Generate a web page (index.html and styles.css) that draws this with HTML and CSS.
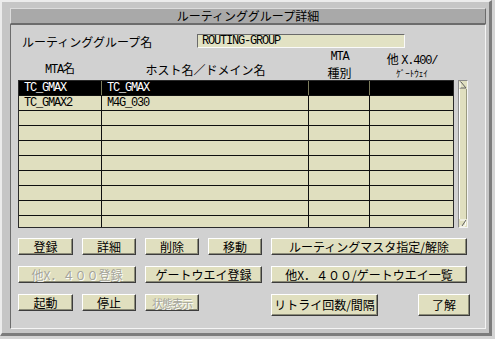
FILE: index.html
```html
<!DOCTYPE html>
<html>
<head>
<meta charset="utf-8">
<title>ルーティンググループ詳細</title>
<link rel="stylesheet" href="styles.css">
</head>
<body>
<div class="window">
  <div class="titlebar">ルーティンググループ詳細</div>
  <div class="panel">
    <div class="name-row">
      <span class="label">ルーティンググループ名</span>
      <div class="field">ROUTING-GROUP</div>
    </div>

    <div class="list-head">
      <div class="one"><span class="mono">MTA</span>名</div>
      <div class="one">ホスト名／ドメイン名</div>
      <div class="two"><div class="mono">MTA</div><div>種別</div></div>
      <div class="two gw"><div>他 <span class="mono">X.400/</span></div><div class="hw">ｹﾞｰﾄｳｪｲ</div></div>
    </div>

    <div class="list-area">
      <div class="list">
        <div class="row sel"><div>TC_GMAX</div><div>TC_GMAX</div><div></div><div></div></div>
        <div class="row"><div>TC_GMAX2</div><div>M4G_030</div><div></div><div></div></div>
        <div class="row"><div></div><div></div><div></div><div></div></div>
        <div class="row"><div></div><div></div><div></div><div></div></div>
        <div class="row"><div></div><div></div><div></div><div></div></div>
        <div class="row"><div></div><div></div><div></div><div></div></div>
        <div class="row"><div></div><div></div><div></div><div></div></div>
        <div class="row"><div></div><div></div><div></div><div></div></div>
        <div class="row"><div></div><div></div><div></div><div></div></div>
        <div class="row"><div></div><div></div><div></div><div></div></div>
      </div>
      <div class="scrollbar">
        <svg class="arr" width="8" height="8" viewBox="0 0 8 8"><polyline points="1,7 7,7 2,1 1,1" fill="none" stroke="#606060" stroke-width="1"/><line x1="1" y1="1" x2="1" y2="7" stroke="#fff"/></svg>
        <div class="track"></div>
        <svg class="arr" width="8" height="8" viewBox="0 0 8 8"><polyline points="1,1 7,1 6,7 1,7" fill="none" stroke="#fff" stroke-width="1"/><line x1="7" y1="1" x2="3" y2="7" stroke="#606060"/></svg>
      </div>
    </div>

    <div class="buttons">
      <button>登録</button>
      <button>詳細</button>
      <button>削除</button>
      <button>移動</button>
      <button>ルーティングマスタ指定/解除</button>

      <button class="wide off">他X．４００登録</button>
      <button class="wide">ゲートウエイ登録</button>
      <button>他X．４００/ゲートウエイ一覧</button>

      <button class="r3">起動</button>
      <button class="r3">停止</button>
      <button class="r3 off small">状態表示</button>
      <div class="last">
        <button class="retry">リトライ回数/間隔</button>
        <button class="ok">了解</button>
      </div>
    </div>
  </div>
</div>
</body>
</html>
```

FILE: styles.css
```css
body {
  margin: 0;
  background: #d4d4d4;
  font-family: "Noto Sans CJK JP", sans-serif;
  font-size: 12px;
  color: #000;
}
.window {
  width: 492px;
  height: 336px;
  box-sizing: border-box;
  border-top: 2px solid #ececec;
  border-left: 2px solid #ececec;
  border-right: 3px solid #7c7c7c;
  border-bottom: 3px solid #7c7c7c;
  background: #c6c6c6;
  padding: 6px 3px 4px 8px;
}
.titlebar {
  height: 16px;
  box-sizing: border-box;
  background: #a9a9a9;
  border: 1px solid;
  border-color: #dcdcdc #6c6c6c #6c6c6c #dcdcdc;
  text-align: center;
  line-height: 14px;
}
.panel {
  height: 305px;
  box-sizing: border-box;
  background: #d1d1d1;
  border: 1px solid;
  border-color: #6c6c6c #f4f4f4 #f4f4f4 #6c6c6c;
  padding: 9px 0 0 7px;
}
.mono {
  font-family: "Liberation Mono", monospace;
  font-size: 12px;
  letter-spacing: -1.2px;
}
.name-row {
  display: flex;
  align-items: center;
  height: 14px;
}
.name-row .label {
  width: 179px;
  box-sizing: border-box;
  padding-left: 4px;
}
.field {
  width: 208px;
  height: 14px;
  box-sizing: border-box;
  background: #e2e2c4;
  border: 1px solid;
  border-color: #6a6a6a #fafafa #fafafa #6a6a6a;
  padding-left: 4px;
  font-family: "Liberation Mono", monospace;
  font-size: 12px;
  letter-spacing: -1.2px;
  line-height: 12px;
}
.list-head {
  display: grid;
  grid-template-columns: 84px 207px 61px 84px;
  height: 30px;
  margin-top: 2px;
  align-items: end;
  text-align: center;
}
.list-head .one {
  line-height: 14px;
  margin-bottom: 3px;
}
.list-head .two {
  line-height: 15px;
}
.list-head .two > div {
  height: 15px;
}
.list-head .gw > div {
  height: 17px;
  line-height: 17px;
}
.list-head .gw > .hw {
  font-size: 9px;
  height: 13px;
  line-height: 13px;
}
.list-area {
  display: flex;
  height: 148px;
}
.list {
  width: 436px;
  height: 148px;
  box-sizing: border-box;
  border: 1px solid #2a2a2a;
  background: #e0dfbf;
  overflow: hidden;
}
.row {
  display: grid;
  grid-template-columns: 83px 207px 61px 83px;
  height: 15px;
  box-sizing: border-box;
  border-bottom: 1px solid #101010;
  font-family: "Liberation Mono", monospace;
  font-size: 12px;
  letter-spacing: -1.2px;
  line-height: 14px;
}
.row > div {
  border-right: 1px solid #101010;
  padding-left: 5px;
}
.row > div:last-child {
  border-right: none;
}
.row.sel {
  background: #000;
  color: #fff;
}
.row.sel > div {
  border-right-color: #7c7c5c;
}
.scrollbar {
  width: 10px;
  height: 148px;
  margin-left: 4px;
  box-sizing: border-box;
  border: 1px solid;
  border-color: #8a8a8a #f4f4f4 #f4f4f4 #8a8a8a;
  background: #e0dfbf;
  display: flex;
  flex-direction: column;
}
.scrollbar .arr {
  display: block;
}
.scrollbar .track {
  flex: 1;
  border-left: 1px solid #fff;
  border-right: 1px solid #9a9a80;
}
.buttons {
  display: grid;
  grid-template-columns: 55px 54px 54px 54px 196px;
  grid-template-rows: 17px 17px 22px;
  column-gap: 9px;
  row-gap: 11px;
  margin-top: 10px;
}
button {
  font-family: "Noto Sans CJK JP", sans-serif;
  font-size: 12px;
  color: #000;
  background: #e0dfbf;
  border: 1px solid;
  border-color: #ffffff #3c3c3c #3c3c3c #ffffff;
  box-shadow: inset -1px -1px 0 #8c8c78;
  padding: 0;
  margin: 0;
  line-height: 14px;
  white-space: nowrap;
}
button.wide {
  grid-column: span 2;
}
button.off {
  color: #a4a49a;
  text-shadow: 1px 1px 0 #fff;
}
button.small {
  font-size: 11px;
  letter-spacing: -1px;
}
.r3 {
  height: 17px;
  align-self: start;
}
.last {
  grid-column: 5;
  display: flex;
  height: 22px;
}
.last .retry {
  width: 107px;
  height: 22px;
  flex: none;
}
.last .ok {
  width: 52px;
  height: 22px;
  margin-left: 40px;
  flex: none;
}
```
